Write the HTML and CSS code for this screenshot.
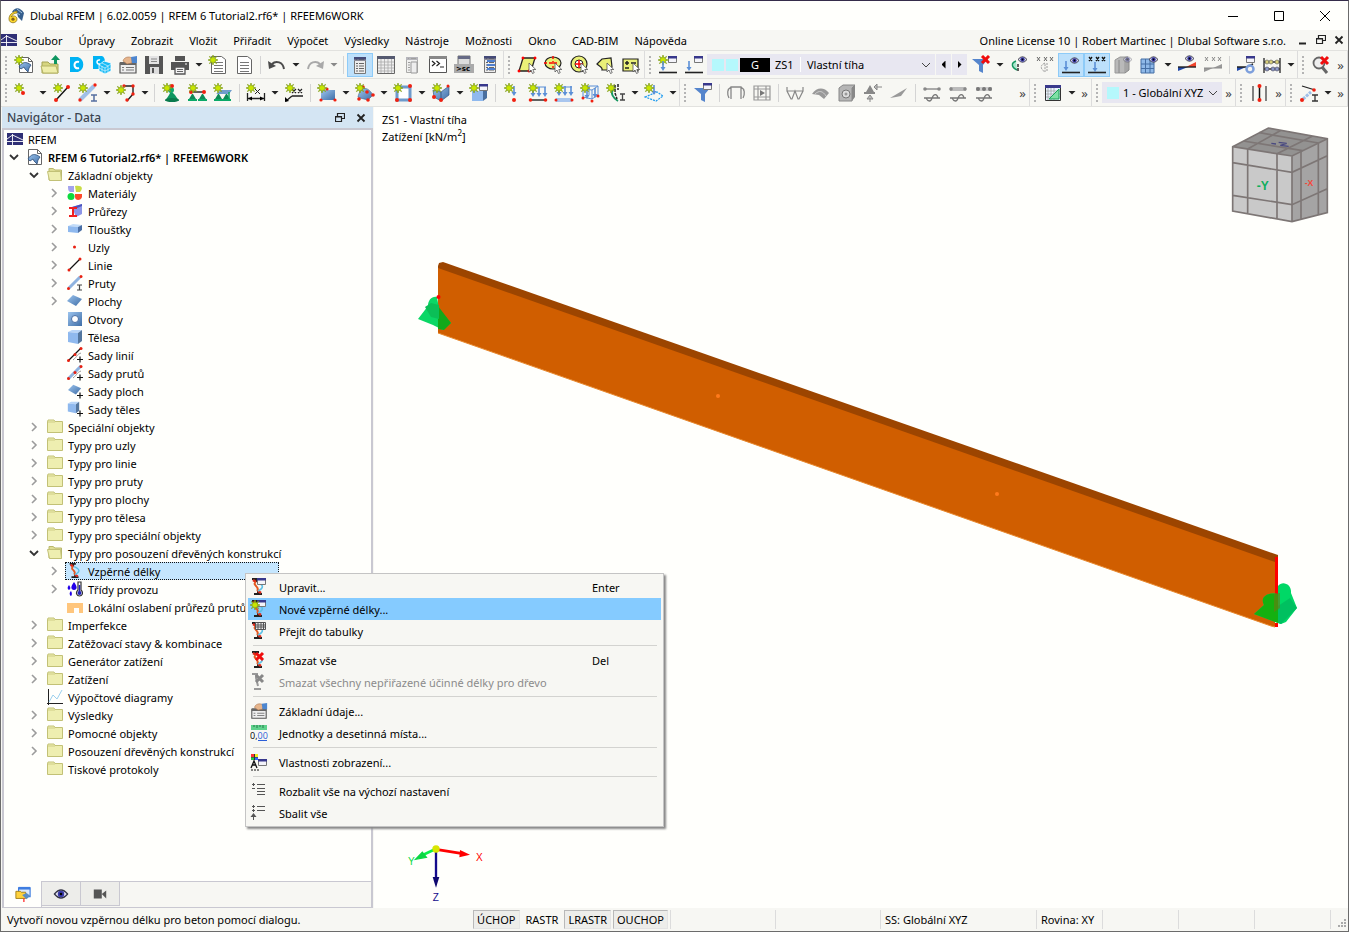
FILE: index.html
```html
<!DOCTYPE html>
<html lang="cs">
<head>
    <meta charset="utf-8">
    <meta name="viewport" content="width=device-width, initial-scale=1.0">
    <title>Dlubal RFEM</title>
    <link rel="stylesheet" href="styles.css">
</head>
<body>
<!-- icon sprite -->
<svg class="sprite" aria-hidden="true">
    <defs>
        <linearGradient id="blue" x1="0" y1="0" x2="1" y2="1"><stop offset="0" stop-color="#9cc4ee"/><stop offset="1" stop-color="#3f6ea6"/></linearGradient>
        <g id="star"><path d="M5 0l.9 3L8.6 1.4 7 4l3 1-3 1 1.6 2.6L5.9 7 5 10l-.9-3-2.7 1.6L3 6 0 5l3-1-1.6-2.6L4.1 3z" fill="#c8e600" stroke="#7d9a1a" stroke-width=".7"/></g>
        <g id="win"><path d="M.5.5h8v6h-8z" fill="#f4f4fa" stroke="#777"/><path d="M0 0h9v2.500H0z" fill="#38388c"/></g>
        <g id="eye"><path d="M0 3.500Q4.500-2 9 3.500 4.500 9 0 3.500z" fill="#dde" stroke="#334" stroke-width=".9"/><circle cx="4.500" cy="3.500" r="2.200" fill="#3a3aa8"/><circle cx="4.500" cy="3.500" r=".9" fill="#000"/></g>
        <g id="cross"><path d="M1 1l7 7M8 1L1 8" stroke="#f00d0d" stroke-width="3"/></g>
        <g id="down"><path d="M2 0v7" stroke="#5b8fd6" stroke-width="1.600"/><path d="M-.5 6h5L2 10z" fill="#5b8fd6"/></g>
        <g id="cursor"><path d="M0 0v9l2-2 1.500 3.500 1.700-.8L3.800 6.500h3z" fill="#fff" stroke="#555" stroke-width=".8"/></g>
        <g id="list"><path d="M.5.5h11v15h-11z" fill="#ededed" stroke="#777"/><path d="M0 0h12v3H0z" fill="#8a8a96"/><path d="M2 1.500h1M5 1.500h5M2 5.500h2M5 5.500h5M2 8h2M5 8h5M2 10.500h2M5 10.500h5M2 13h2M5 13h5" stroke="#666"/></g>
        <g id="page"><path d="M.5.500h9l4 4v11H.5z" fill="#fff" stroke="#666"/><path d="M9.500.5v4h4" fill="none" stroke="#666"/></g>
        <g id="swoosh"><path d="M0 6C3 1 7 0 12 4l-2 3-1 4-3-3-1-2-3 2z" fill="url(#blue)" stroke="#2c4d77" stroke-width=".8"/></g>
        <g id="sup"><path d="M4 0h1l3 5H1z" fill="#0d8a57"/><path d="M0 5h9v2H0z" fill="#0aa867"/></g>
        <g id="strut"><path d="M2 1h7M6 1v3M4 16h8M8 16v-3" stroke="#222" stroke-width="2"/><path d="M3 2l3 2M11 15l-3-2" stroke="#e02a1a" stroke-width="2.500"/><path d="M6 4C1 7 11 9 7 13" fill="none" stroke="#e4571f" stroke-width="2"/><path d="M7 4c7 3 7 6 1 9" fill="none" stroke="#5cc0e6" stroke-width="1.600"/></g>
    </defs>
    <symbol id="bridge" viewBox="0 0 16 12"><path d="M0 0h16v12H0z" fill="#2f2f75"/><path d="M0 8.500h16M5.500 1v11M5.500 2L0 6M5.500 2L16 7" stroke="#fff" stroke-width=".9"/></symbol>
    <symbol id="app" viewBox="0 0 16 16"><path d="M4 4C7-1 12-1 16 5l-2 8-4-4-1-4z" fill="#365f8d"/><path d="M6 3l6 4M9 1l5 4" stroke="#a5c3dd"/><path d="M9 3C4 4 1 7 1 11c0 5 8 5 8 0 0-3-4-4-6-2 1-2 3-4 6-4z" fill="#ffd92e" stroke="#8b731c" stroke-width=".8"/><circle cx="5" cy="11.200" r="1.600" fill="#83631c"/></symbol>
    <symbol id="model" viewBox="0 0 16 16"><use href="#page" x="1"/><use href="#swoosh" x="1" y="4"/></symbol>
    <symbol id="fold" viewBox="0 0 16 16"><path d="M.5 3V13.500h15V2.500H8l-1-1.500H1z" fill="#eeeeb0" stroke="#c2c176"/><path d="M1 3h7" stroke="#cfce86"/></symbol>
    <symbol id="foldopen" viewBox="0 0 16 16"><path d="M2 5V1.500h4L8 3h6.500v10H2z" fill="#dedd94" stroke="#b9b86d"/><path d="M.5 4.500h13l1 9h-12z" fill="#eeeeb0" stroke="#c2c176"/></symbol>
    <symbol id="right" viewBox="0 0 10 10"><path d="M3 1l4 4-4 4" fill="none" stroke="#9c9c9c" stroke-width="1.600"/></symbol>
    <symbol id="open" viewBox="0 0 10 10"><path d="M1 3l4 4 4-4" fill="none" stroke="#333" stroke-width="1.800"/></symbol>
    <symbol id="restore" viewBox="0 0 10 10"><path d="M2.500 3V.5h7v5H7M.5 3.500h6v5h-6zM.5 4h6" fill="none" stroke="#222" stroke-width="1.200"/></symbol>
    <symbol id="close" viewBox="0 0 10 10"><path d="M1.500 1.500l7 7M8.500 1.500l-7 7" stroke="#222" stroke-width="1.800"/></symbol>

    <!-- tree -->
    <symbol id="mat" viewBox="0 0 16 16"><path d="M1 1h6v6H3C1 6 1 4 1 1z" fill="#a3a3ec"/><path d="M8 1c8-1 8 3 5 6H9z" fill="#c9dc45"/><circle cx="4" cy="11.500" r="3.500" fill="#0ddb3e"/><path d="M8 9h7v3c-1 4-7 4-7 0z" fill="#ff4a2a"/></symbol>
    <symbol id="sect" viewBox="0 0 16 16"><path d="M5 4l10-3v10l-6 3z" fill="#8c95e6"/><path d="M5 4l10-3v2L8 6z" fill="#4c55bd"/><path d="M2 5h8M2 13h8M6 5v8" stroke="#f02020" stroke-width="2"/></symbol>
    <symbol id="thick" viewBox="0 0 16 16"><path d="M1 5l5-2 9 1-4 2z" fill="#c2dcf8"/><path d="M1 5l10 1v6L1 11z" fill="#8fb9ee"/><path d="M11 6l4-2v5l-4 3z" fill="#4a6fa5"/></symbol>
    <symbol id="node" viewBox="0 0 16 16"><circle cx="7.500" cy="8" r="1.500" fill="#e82010"/></symbol>
    <symbol id="line" viewBox="0 0 16 16"><path d="M2 13L13 2" stroke="#111" stroke-width="1.200"/><circle cx="2" cy="13" r="1.500" fill="#e82010"/><circle cx="13" cy="2" r="1.500" fill="#e82010"/></symbol>
    <symbol id="memb" viewBox="0 0 16 16"><path d="M2 13L13 2" stroke="#8fb3e0" stroke-width="3"/><circle cx="1.500" cy="13.500" r="1.500" fill="#e82010"/><circle cx="14" cy="1.500" r="1.500" fill="#e82010"/><path d="M10 10h5M10 15h5M12.500 10v5" stroke="#444" stroke-width="1.200"/></symbol>
    <symbol id="surf" viewBox="0 0 16 16"><path d="M0 8l6-6 9 4-6 7z" fill="url(#blue)"/></symbol>
    <symbol id="hole" viewBox="0 0 16 16"><path d="M1 1h14v14H1z" fill="url(#blue)"/><circle cx="8" cy="8" r="3.500" fill="#fff" stroke="#4a6fa5"/></symbol>
    <symbol id="solid" viewBox="0 0 16 16"><path d="M1 3l4-2h10l-4 3z" fill="#b8d5f8"/><path d="M1 3l10 1v11L1 13z" fill="#8fb9ee"/><path d="M11 4l4-3v11l-4 3z" fill="#54779f"/></symbol>
    <symbol id="plus" viewBox="0 0 16 16"><path d="M10 12.500h6M13 9.500v6" stroke="#111" stroke-width="1.200"/></symbol>
    <symbol id="slin" viewBox="0 0 16 16"><path d="M6 13c5-4 3-5 8-7" fill="none" stroke="#999"/><path d="M1 14L14 1" stroke="#111" stroke-width="1.200"/><circle cx="1.500" cy="13.500" r="1.500" fill="#e82010"/><circle cx="8" cy="7.500" r="1.500" fill="#e82010"/><circle cx="14" cy="1.500" r="1.500" fill="#e82010"/><use href="#plus" width="16" height="16"/></symbol>
    <symbol id="smem" viewBox="0 0 16 16"><path d="M6 13c5-4 3-5 8-7" fill="none" stroke="#999"/><path d="M1 14L14 1" stroke="#8fb3e0" stroke-width="3"/><circle cx="1.500" cy="13.500" r="1.500" fill="#e82010"/><circle cx="8" cy="7.500" r="1.500" fill="#e82010"/><circle cx="14" cy="1.500" r="1.500" fill="#e82010"/><use href="#plus" width="16" height="16"/></symbol>
    <symbol id="ssur" viewBox="0 0 16 16"><use href="#surf" width="16" height="14"/><use href="#plus" width="16" height="16"/></symbol>
    <symbol id="ssol" viewBox="0 0 16 16"><use href="#solid" width="13" height="13"/><use href="#plus" width="16" height="16"/></symbol>
    <symbol id="buck" viewBox="0 0 18 18"><use href="#strut" x="1"/></symbol>
    <symbol id="drops" viewBox="0 0 16 16"><path d="M7 1c4 5 3 8 0 8S3 6 7 1zM2 4c3 4 0 5 0 5S-1 8 2 4zM4 10c2 3 0 5 0 5s-3-2 0-5z" fill="#2200e8"/><path d="M11 1h3v8c3 3 1 6-1.500 6S8 12 11 9z" fill="#fff" stroke="#333" stroke-width="1.200"/><circle cx="12.500" cy="12" r="2" fill="#2222b8"/><path d="M12.500 4v7" stroke="#2222b8" stroke-width="1.500"/></symbol>
    <symbol id="notch" viewBox="0 0 16 16"><path d="M0 4h16v10h-4V9H7v5H0z" fill="#ffc67c"/></symbol>
    <symbol id="graph" viewBox="0 0 16 16"><path d="M1.500 0v14.500H16M0 14.500h3M1.500 16v-2" fill="none" stroke="#222"/><path d="M2 13l4-7 4 4 5-9" fill="none" stroke="#9bd0ee"/></symbol>

    <!-- main toolbar -->
    <symbol id="new" viewBox="0 0 20 20"><use href="#page" x="5" y="2"/><use href="#swoosh" x="5" y="6"/><use href="#star"/></symbol>
    <symbol id="openf" viewBox="0 0 20 20"><path d="M2 18V7h6l2 2h8v9z" fill="#d6d580" stroke="#a5a455"/><path d="M1 11h15l2 7H3z" fill="#eeedaa" stroke="#b5b465"/><path d="M14 9V5h-3l4.500-5L20 5h-3v4z" fill="#0e9660"/></symbol>
    <symbol id="cloud" viewBox="0 0 20 20"><path d="M4 2h8c7 2 7 13 0 15H4z" fill="#00b3f4"/><path d="M13 7c-6-2-6 8 0 6" fill="none" stroke="#fff" stroke-width="2"/></symbol>
    <symbol id="cloud2" viewBox="0 0 20 20"><path d="M1 1h9c4 1 4 11 0 13H1z" fill="#00b3f4"/><path d="M7 10l5-4 7 2v8l-6 3-6-3z" fill="#18bbf5" stroke="#fff" stroke-width=".8"/><path d="M7 10l6 3 6-4M13 13v6M10 8l6 3M10 17v-6M7 13l6 3 6-3M16 11v6" stroke="#d5f4ff" stroke-width=".7" fill="none"/><path d="M8 5c-4-1-4 5 0 4" fill="none" stroke="#fff" stroke-width="1.500"/></symbol>
    <symbol id="base" viewBox="0 0 20 20"><path d="M2 8h16v10H2z" fill="#eee" stroke="#555" stroke-width="1.200"/><path d="M2 7h16v3H2z" fill="#666"/><path d="M4 12.500h2M8 12.500h8M4 15h2M8 15h8" stroke="#777"/><path d="M5 6c1-4 6-5 9-3v5L9 9z" fill="#e6b58c" stroke="#a8714c" stroke-width=".6"/><path d="M13 2l6-1v7h-5z" fill="#4d86cf"/></symbol>
    <symbol id="save" viewBox="0 0 20 20"><path d="M1 1h18v18H1z" fill="#555"/><path d="M5 1h10v8H5z" fill="#e4e4e4"/><path d="M7 4h6M7 6.500h6" stroke="#888"/><path d="M6 12h9v7H6z" fill="#ddd"/><path d="M8 13h2v5H8z" fill="#555"/></symbol>
    <symbol id="print" viewBox="0 0 20 20"><path d="M5 1h10v5H5zM1 7h18v8H1z" fill="#555"/><path d="M5 12h10v7H5z" fill="#f4f4f4" stroke="#555" stroke-width="1.300"/><path d="M7 14.500h6M7 16.500h6" stroke="#666"/><path d="M15 9h2" stroke="#fff"/></symbol>
    <symbol id="rep" viewBox="0 0 20 20"><path d="M3.500 1.500h10l4 3v14h-14z" fill="#fff" stroke="#666"/><path d="M6 7.500h9M6 10.500h9M6 13.500h9M6 16.500h9" stroke="#777"/></symbol>
    <symbol id="repn" viewBox="0 0 20 20"><use href="#rep" width="20" height="20"/><use href="#star"/></symbol>
    <symbol id="undo" viewBox="0 0 20 20"><path d="M5 9c4-4 11-2 12 5" fill="none" stroke="#4b4b4b" stroke-width="2"/><path d="M1 6l1 8 7-3z" fill="#4b4b4b"/></symbol>
    <symbol id="redo" viewBox="0 0 20 20"><path d="M15 9C11 5 4 7 3 14" fill="none" stroke="#a9a9a9" stroke-width="2"/><path d="M19 6l-1 8-7-3z" fill="#a9a9a9"/></symbol>
    <symbol id="navi" viewBox="0 0 20 20"><use href="#list" x="4" y="3"/><path d="M4 2h12v2.500H4z" fill="#444a78"/></symbol>
    <symbol id="tabl" viewBox="0 0 20 20"><path d="M1.500 1.500h17v17h-17z" fill="#eee" stroke="#666"/><path d="M1 1h18v3H1z" fill="#555a70"/><path d="M5 4v14M8.500 4v14M12 4v14M15.500 4v14M2 7h16M2 10h16M2 13h16M2 16h16" stroke="#aaa" stroke-width=".8"/></symbol>
    <symbol id="pan" viewBox="0 0 20 20"><g opacity=".6"><use href="#list" x="4" y="2"/></g><path d="M9 7h6v11H9z" fill="#eee" stroke="#999"/></symbol>
    <symbol id="cons" viewBox="0 0 20 20"><path d="M1.500 1.500h17v16h-17z" fill="#fff" stroke="#555"/><path d="M1 1h18v3H1z" fill="#888"/><path d="M4 6l3 2.500L4 11M8.500 6l3 2.500-3 2.500M12 12h4" fill="none" stroke="#222" stroke-width="1.200"/></symbol>
    <symbol id="resn" viewBox="0 0 20 20"><use href="#list" x="4" y="2"/><path d="M4 1h12v2.500H4z" fill="#444a78"/><path d="M7 6h8M7 10h8M7 14h8" stroke="#4d7fd0" stroke-width="2"/></symbol>
    <symbol id="spoly" viewBox="0 0 20 20"><path d="M6 3h12l-4 13H2z" fill="#eaf078" stroke="#222" stroke-width="1.300"/><path d="M5 2h2v2H5zM17 2h2v2h-2zM1 15h2v2H1zM11 15h2v2h-2z" stroke="#f00" fill="#f00" stroke-width=".6"/><use href="#cursor" x="12" y="8"/></symbol>
    <symbol id="sell" viewBox="0 0 20 20"><ellipse cx="10" cy="8" rx="8" ry="6" fill="#eaf078" stroke="#222" stroke-width="1.200"/><path d="M10 1v12M1 8h6M6 8h8" stroke="#f00" stroke-width="1.400" stroke-dasharray="3 2"/><use href="#cursor" x="12" y="8"/></symbol>
    <symbol id="scir" viewBox="0 0 20 20"><circle cx="10" cy="9" r="8" fill="#eaf078" stroke="#222" stroke-width="1.200"/><circle cx="10" cy="9" r="4" fill="#fff" stroke="#222"/><path d="M10 5v8M6 9h8" stroke="#f00" stroke-width="1.500"/><use href="#cursor" x="12" y="8"/></symbol>
    <symbol id="slas" viewBox="0 0 20 20"><path d="M2 9L7 4l9-1 1 9-3 3H7c1-3-3-4-5-6z" fill="#eaf078" stroke="#222" stroke-width="1.200"/><use href="#cursor" x="12" y="8"/></symbol>
    <symbol id="snum" viewBox="0 0 20 20"><path d="M2 4h15v12H2z" fill="#eaf078" stroke="#222" stroke-width="1.200"/><path d="M4 8h4M6 6v4M10 8h5M4 13h4" stroke="#222" stroke-width="1.500"/><use href="#cursor" x="12" y="8"/></symbol>
    <symbol id="lcn" viewBox="0 0 20 20"><use href="#star"/><use href="#down" x="3" y="6"/><use href="#win" x="10" y="1"/><path d="M1 17.500h18" stroke="#222" stroke-width="1.600"/></symbol>
    <symbol id="lc" viewBox="0 0 20 20"><use href="#down" x="3" y="6"/><use href="#win" x="10" y="1"/><path d="M1 17.500h18" stroke="#222" stroke-width="1.600"/></symbol>
    <symbol id="filx" viewBox="0 0 20 20"><path d="M1 4h16l-5 6v8l-4-2v-6z" fill="#5585cc"/><use href="#cross" x="10" y="0"/></symbol>
    <symbol id="filw" viewBox="0 0 20 20"><path d="M1 5h16l-5 6v8l-4-2v-6z" fill="#5585cc"/><use href="#win" x="10" y="0"/></symbol>
    <symbol id="supe" viewBox="0 0 20 20"><path d="M7 6c-5 2-5 6 1 9" fill="#a9e6cc" stroke="#14965f" stroke-width="1.400"/><path d="M9 9v8" stroke="#222" stroke-width="1.400" stroke-dasharray="3 1"/><use href="#eye" x="9" y="1"/></symbol>
    <symbol id="xsup" viewBox="0 0 20 20"><path d="M2 2l3 4M5 2L2 6M9 2l3 4M12 2L9 6M15 2l3 4M18 2l-3 4" stroke="#666"/><path d="M10 8c-5 2-5 6 0 9V8M12 8v9" fill="none" stroke="#999" stroke-dasharray="2 1"/></symbol>
    <symbol id="ldse" viewBox="0 0 20 20"><use href="#down" x="3" y="6"/><use href="#eye" x="9" y="2"/><path d="M1 17.500h18" stroke="#222" stroke-width="1.600"/></symbol>
    <symbol id="xld" viewBox="0 0 20 20"><path d="M2 2l3 4M5 2L2 6M9 2l3 4M12 2L9 6M15 2l3 4M18 2l-3 4" stroke="#111" stroke-width="1.300"/><use href="#down" x="6" y="7"/><path d="M1 17.500h18" stroke="#222" stroke-width="1.600"/></symbol>
    <symbol id="cubg" viewBox="0 0 20 20"><path d="M2 5l5-3h8l-3 3v13H2z" fill="#b9b9b9" stroke="#999"/><path d="M6 5v13M12 5l4-2v12l-4 3" stroke="#888" fill="#a5a5a5"/><g opacity=".4"><use href="#eye" x="10" y="1"/></g></symbol>
    <symbol id="gride" viewBox="0 0 20 20"><path d="M2 4h13v14H2z" fill="#8fb9e8" stroke="#456fa5"/><path d="M6.500 4v14M11 4v14M2 9h13M2 13.500h13" stroke="#456fa5"/><use href="#eye" x="10" y="1"/></symbol>
    <symbol id="rese" viewBox="0 0 20 20"><path d="M1 12h10l-10 4z" fill="#2148a8"/><path d="M19 12H9l10-5z" fill="#f0442b"/><path d="M1 12h18" stroke="#222" stroke-width="1.400"/><use href="#eye" x="8" y="0"/></symbol>
    <symbol id="xres" viewBox="0 0 20 20"><path d="M2 2l3 4M5 2L2 6M9 2l3 4M12 2L9 6M15 2l3 4M18 2l-3 4" stroke="#888"/><path d="M1 13h9l-9 4zM19 13h-9l9-4z" fill="#999"/><path d="M1 13h18" stroke="#888"/></symbol>
    <symbol id="calc" viewBox="0 0 20 20"><path d="M1 12h9l-9 4z" fill="#2148a8"/><path d="M1 12h10l6-3" stroke="#222" stroke-width="1.400" fill="none"/><use href="#win" x="10" y="1"/><circle cx="14" cy="14" r="3.500" fill="none" stroke="#7d9fdc" stroke-width="2.500"/></symbol>
    <symbol id="abac" viewBox="0 0 20 20"><path d="M2 3v15M18 3v15M2 7h16M2 14h16" stroke="#333" stroke-width="1.400"/><g fill="#d8cf7a" stroke="#555" stroke-width=".6"><circle cx="5" cy="7" r="2"/><circle cx="9" cy="7" r="2"/><circle cx="15" cy="7" r="2"/></g><g fill="#8b97c9" stroke="#445" stroke-width=".6"><circle cx="5" cy="14" r="2"/><circle cx="11" cy="14" r="2"/><circle cx="15" cy="14" r="2"/></g></symbol>
    <symbol id="zoomx" viewBox="0 0 20 20"><circle cx="8" cy="8" r="5.500" fill="#eee" stroke="#666" stroke-width="1.800"/><path d="M11 12l5 6" stroke="#666" stroke-width="3"/><use href="#cross" x="9" y="1"/></symbol>

    <!-- insert toolbar -->
    <symbol id="inod" viewBox="0 0 20 20"><use href="#star"/><circle cx="9" cy="10" r="2" fill="#f02010"/></symbol>
    <symbol id="ilin" viewBox="0 0 20 20"><path d="M4 17L16 4" stroke="#111" stroke-width="1.400"/><circle cx="4" cy="17" r="2" fill="#f02010"/><circle cx="16" cy="4" r="2" fill="#f02010"/><use href="#star" x="1"/></symbol>
    <symbol id="imem" viewBox="0 0 20 20"><path d="M2 17L16 3" stroke="#9fbfe8" stroke-width="4"/><circle cx="2" cy="17" r="1.700" fill="#f02010"/><circle cx="17" cy="2" r="1.700" fill="#f02010"/><path d="M13 12h6M13 18h6M16 12v6" stroke="#556fa0" stroke-width="1.500"/><use href="#star"/></symbol>
    <symbol id="ipol" viewBox="0 0 20 20"><path d="M8 3h9v8l-6 7" fill="none" stroke="#222" stroke-width="1.400"/><g fill="#f02010"><circle cx="8" cy="3" r="1.700"/><circle cx="17" cy="3" r="1.700"/><circle cx="17" cy="11" r="1.700"/><circle cx="11" cy="17" r="1.700"/></g><use href="#star" y="2"/></symbol>
    <symbol id="isup" viewBox="0 0 20 20"><path d="M10 8l4 4 4 6H4l4-6z" fill="#0d9660"/><ellipse cx="11" cy="17" rx="7" ry="2" fill="#0a7a4d"/><circle cx="10" cy="7" r="3" fill="#13a86c"/><circle cx="11" cy="3" r="2" fill="#f02010"/><use href="#star" x="1"/></symbol>
    <symbol id="isul" viewBox="0 0 20 20"><use href="#sup" x="1" y="11"/><use href="#sup" x="11" y="11"/><path d="M4 9h13" stroke="#222" stroke-width="1.400"/><circle cx="4" cy="9" r="2" fill="#f02010"/><circle cx="17" cy="9" r="2" fill="#f02010"/><use href="#star" x="1"/></symbol>
    <symbol id="isus" viewBox="0 0 20 20"><path d="M3 11l5-4h11l-3 4z" fill="#6f9ccc"/><use href="#sup" x="1" y="11"/><use href="#sup" x="9" y="11"/><path d="M16 9v8" stroke="#0aa867" stroke-width="1.500"/><use href="#star"/></symbol>
    <symbol id="idim" viewBox="0 0 20 20"><path d="M1.500 10v8M18.500 10v8M1 15.500h18" stroke="#222" stroke-width="1.300"/><path d="M2 15.500l4-2v4zM18 15.500l-4-2v4z"/><path d="M9 6l5 5M14 6l-5 5" stroke="#222"/><use href="#star"/></symbol>
    <symbol id="ixx" viewBox="0 0 20 20"><path d="M8 13h11M8 13l-6 5" stroke="#222" stroke-width="1.400"/><path d="M1 19v-5l4 4z"/><path d="M8 6l4 4M12 6l-4 4M14 6l4 4M18 6l-4 4" stroke="#222" stroke-width="1.200"/><use href="#star" x="1"/></symbol>
    <symbol id="isur" viewBox="0 0 20 20"><path d="M4 7h14v10H4z" fill="url(#blue)"/><circle cx="4" cy="17" r="1.600" fill="#f02010"/><circle cx="18" cy="17" r="1.600" fill="#f02010"/><circle cx="10" cy="6" r="1.600" fill="#f02010"/><use href="#star"/></symbol>
    <symbol id="ibow" viewBox="0 0 20 20"><path d="M3 14c2-10 9-12 15-2l-5 5-8-2z" fill="url(#blue)" stroke="#3a5f8c" stroke-width=".6"/><g fill="#f02010"><circle cx="8" cy="4" r="1.800"/><circle cx="12" cy="9" r="1.800"/><circle cx="18" cy="12" r="1.800"/><circle cx="4" cy="16" r="1.800"/><circle cx="13" cy="17" r="1.800"/></g><use href="#star"/></symbol>
    <symbol id="ihol" viewBox="0 0 20 20"><path d="M4 4h13v13H4z" fill="#fff" stroke="#6e9acb" stroke-width="3"/><g fill="#f02010"><circle cx="17" cy="3" r="2"/><circle cx="4" cy="17" r="2"/><circle cx="17" cy="17" r="2"/></g><use href="#star"/></symbol>
    <symbol id="isol" viewBox="0 0 20 20"><path d="M2 7l8 2 8-6v9l-8 6-7-4z" fill="url(#blue)" stroke="#385a85" stroke-width=".7"/><path d="M10 9v9" stroke="#385a85"/><g fill="#f02010"><circle cx="3" cy="14" r="2"/><circle cx="10" cy="17" r="2"/><circle cx="17" cy="3" r="1.500"/></g><use href="#star" x="1"/></symbol>
    <symbol id="ibox" viewBox="0 0 20 20"><path d="M3 8h11v10H3z" fill="#8fb9ee"/><path d="M14 8l4-3v10l-4 3z" fill="#4a6f9f"/><use href="#star"/><use href="#win" x="10" y="1"/></symbol>
    <symbol id="ln" viewBox="0 0 20 20"><use href="#down" x="10" y="3"/><circle cx="12" cy="17" r="2" fill="#f02010"/><use href="#star" x="2"/></symbol>
    <symbol id="ll" viewBox="0 0 20 20"><path d="M4 4h14" stroke="#5b8fd6"/><use href="#down" x="3" y="4"/><use href="#down" x="9" y="4"/><use href="#down" x="15" y="4"/><path d="M2 17h16" stroke="#222" stroke-width="1.400"/><circle cx="2.500" cy="17" r="1.800" fill="#f02010"/><circle cx="17.500" cy="17" r="1.800" fill="#f02010"/><use href="#star"/></symbol>
    <symbol id="lm" viewBox="0 0 20 20"><path d="M4 4h14" stroke="#5b8fd6"/><use href="#down" x="3" y="3"/><use href="#down" x="9" y="3"/><use href="#down" x="15" y="3"/><path d="M2 17h16" stroke="#a9c6ee" stroke-width="4"/><circle cx="2" cy="17" r="1.500" fill="#f02010"/><circle cx="18" cy="17" r="1.500" fill="#f02010"/><use href="#star"/></symbol>
    <symbol id="lsu" viewBox="0 0 20 20"><path d="M3 6l6-3h9v9l-6 4-9-2zM9 3v9M12 7v9M3 6l9 1 6-4" fill="none" stroke="#5b8fd6"/><use href="#down" x="5" y="6"/><use href="#down" x="13" y="5"/><g fill="#f02010"><circle cx="3" cy="15" r="1.500"/><circle cx="12" cy="18" r="1.500"/><circle cx="18" cy="13" r="1.500"/></g><use href="#star"/></symbol>
    <symbol id="lfr" viewBox="0 0 20 20"><path d="M7 6c-3 4 0 9 5 12" fill="none" stroke="#14965f" stroke-width="1.800"/><path d="M9 2v8l2 6M12 1v6" stroke="#222" stroke-width="1.500" fill="none" stroke-dasharray="3 1"/><path d="M14 11h5M14 17h5M16.500 11v6" stroke="#444" stroke-width="1.300"/><use href="#star"/></symbol>
    <symbol id="lfree" viewBox="0 0 20 20"><path d="M1 14l12-5 6 4-7 5z" fill="none" stroke="#1d9bf0" stroke-width="1.200" stroke-dasharray="2 1"/><use href="#down" x="8" y="2"/><use href="#star"/></symbol>
    <symbol id="gfra" viewBox="0 0 20 20"><path d="M5 16V4h10v12M5 4C1 6 1 11 3 15M15 4c4 2 4 7 2 11" fill="none" stroke="#888" stroke-width="1.300"/></symbol>
    <symbol id="gfil" viewBox="0 0 20 20"><path d="M2 3h16v14H2zM2 6h16M2 14h16M6 3v14M14 3v14" fill="none" stroke="#999" stroke-width="1.200"/><path d="M8 7l5 3-5 3z" fill="#777"/></symbol>
    <symbol id="gcur" viewBox="0 0 20 20"><path d="M2 4v4l4 8h1l3-8 3 8h1l4-8V4M2 8h16" fill="none" stroke="#888" stroke-width="1.200"/></symbol>
    <symbol id="gsur" viewBox="0 0 20 20"><path d="M1 11c5-7 12-7 17-1l-5 6-5-4z" fill="#999"/><path d="M4 11c4-4 8-3 11 2" stroke="#ccc" fill="none"/></symbol>
    <symbol id="gsol" viewBox="0 0 20 20"><path d="M2 5l4-3h12l-3 3v13H2z" fill="#b5b5b5" stroke="#888"/><path d="M15 5l3-3v12l-3 4z" fill="#888"/><circle cx="9" cy="11" r="4" fill="#ddd" stroke="#777"/><circle cx="9" cy="11" r="1.500" fill="#999"/></symbol>
    <symbol id="grea" viewBox="0 0 20 20"><path d="M7 2l4 7H3zM1 9h11v2H1z" fill="#888"/><path d="M19 4h-5M14 1l-3 3 3 3zM7 19v-4M4 16l3-4 3 4z" fill="#bbb" stroke="#888"/></symbol>
    <symbol id="gsec" viewBox="0 0 20 20"><path d="M1 15L18 5l-6 8-5 1z" fill="#999"/></symbol>
    <symbol id="gd1" viewBox="0 0 20 20"><path d="M2 6h16" stroke="#888" stroke-width="1.400"/><circle cx="3" cy="6" r="1.800" fill="#888"/><circle cx="17" cy="6" r="1.800" fill="#888"/><path d="M2 15h16M4 15c2 4 5 4 6 0 2-5 5-4 6 0" fill="none" stroke="#777" stroke-width="1.300"/></symbol>
    <symbol id="gd2" viewBox="0 0 20 20"><path d="M2 6h16" stroke="#bbb" stroke-width="4"/><circle cx="3" cy="6" r="1.800" fill="#888"/><circle cx="17" cy="6" r="1.800" fill="#888"/><path d="M2 15h16M4 15c2 4 5 4 6 0 2-5 5-4 6 0" fill="none" stroke="#777" stroke-width="1.300"/></symbol>
    <symbol id="gd3" viewBox="0 0 20 20"><path d="M2 6h16" stroke="#ccc" stroke-width="4"/><circle cx="4" cy="6" r="2" fill="#777"/><circle cx="10" cy="6" r="2" fill="#777"/><circle cx="16" cy="6" r="2" fill="#777"/><path d="M2 15h16M4 15c2 4 5 4 6 0 2-5 5-4 6 0" fill="none" stroke="#777" stroke-width="1.300"/></symbol>
    <symbol id="work" viewBox="0 0 20 20"><path d="M2.500 2.500h15v15h-15z" fill="#e8f4ff" stroke="#333"/><path d="M2 2h16v3H2z" fill="#3a3a8c"/><path d="M5 5v12M8 5v12M11 5v12M3 8h14M3 11h14M3 14h14" stroke="#999" stroke-width=".7"/><path d="M6 16h10V6z" fill="#7fe0a4" stroke="#18a058"/></symbol>
    <symbol id="axis" viewBox="0 0 20 20"><path d="M4 3v15M17 3v15" stroke="#444" stroke-width="1.300"/><path d="M10.500 3v14" stroke="#111" stroke-width="1.500"/><circle cx="10.500" cy="3" r="2" fill="#f02010"/><circle cx="10.500" cy="17" r="2" fill="#f02010"/></symbol>
    <symbol id="ecc" viewBox="0 0 20 20"><path d="M3 3l13 4" stroke="#222" stroke-width="1.300"/><circle cx="15" cy="7" r="1.800" fill="#f02010"/><path d="M4 16l8-7" stroke="#9fbfe8" stroke-width="3" stroke-dasharray="3 1"/><circle cx="3" cy="17" r="2" fill="#f02010"/><path d="M13 12h6M13 18h6M16 12v6" stroke="#333" stroke-width="1.300"/></symbol>

    <!-- context menu -->
    <symbol id="medit" viewBox="0 0 18 18"><use href="#strut"/><use href="#win" x="7" y="0"/></symbol>
    <symbol id="mnew" viewBox="0 0 18 18"><use href="#strut"/><use href="#win" x="7" y="0"/><use href="#star"/></symbol>
    <symbol id="mtab" viewBox="0 0 18 18"><use href="#strut"/><path d="M5.500.5h10v7h-10zM5 3h10M5 5h10M8 0v8M11 0v8M13.500 0v8" fill="#eee" stroke="#555"/></symbol>
    <symbol id="mdel" viewBox="0 0 18 18"><use href="#strut"/><use href="#cross" x="5" y="1"/></symbol>
    <symbol id="mdelg" viewBox="0 0 18 18"><path d="M2 1h6M6 1v4l2 8M4 16h7" stroke="#999" stroke-width="2" fill="none"/><path d="M6 2l7 7M13 2L6 9" stroke="#888" stroke-width="3"/></symbol>
    <symbol id="mexp" viewBox="0 0 18 18"><path d="M2 2.500h3M3.500 1v3M2 6.500h3M7 2.500h8M7 6.500h8M7 9.500h8M7 12.500h8" stroke="#555"/></symbol>
    <symbol id="mcol" viewBox="0 0 18 18"><path d="M2 2.500h3M3.500 1v3M2 6.500h3M3.500 5v3M7 2.500h8M7 6.500h8M3.500 16v-5" stroke="#555"/><path d="M.5 13l3-4 3 4z" fill="#555"/></symbol>
    <symbol id="mdis" viewBox="0 0 18 18"><path d="M1 1h7v6H1z" fill="#333"/><path d="M1 1h3v3H1z" fill="#f33"/><path d="M5 1h3v3H5z" fill="#ee2"/><path d="M1 4.500h3v2.500H1z" fill="#2c4"/><path d="M5 4.500h3v2.500H5z" fill="#36f"/><path d="M1 15l3-7 3 7M2 12h4" fill="none" stroke="#111" stroke-width="1.300"/><path d="M1 17h8" stroke="#111" stroke-dasharray="2 1"/><use href="#win" x="8" y="6"/></symbol>
    <symbol id="tdata" viewBox="0 0 18 18"><path d="M4 2h13v10H4z" fill="#dce9fb" stroke="#3f7de0" stroke-width="1.300"/><path d="M4 1h13v3H4z" fill="#3f7de0"/><path d="M1 6h5l1 1h5v7H1z" fill="#ffd23c" stroke="#a07b12"/><path d="M8 10l5-2 4 3-4 4z" fill="#5b8fc4"/><path d="M10 14v4" stroke="#f33" stroke-width="1.500"/></symbol>
    <symbol id="tcam" viewBox="0 0 18 18"><path d="M2 4h9v10H2zM11 9l5-4v9z" fill="#555"/></symbol>
</svg>

<div class="window">
    <header class="titlebar">
        <svg class="i16"><use href="#app"/></svg>
        <span class="title">Dlubal RFEM | 6.02.0059 | RFEM 6 Tutorial2.rf6* | RFEEM6WORK</span>
        <div class="winbtns">
            <button aria-label="Minimalizovat"><svg viewBox="0 0 10 10"><path d="M0 5.500h10" stroke="#000"/></svg></button>
            <button aria-label="Maximalizovat"><svg viewBox="0 0 10 10"><path d="M.5.5h9v9h-9z" fill="none" stroke="#000"/></svg></button>
            <button aria-label="Zavřít"><svg viewBox="0 0 10 10"><path d="M0 0l10 10M10 0L0 10" stroke="#000"/></svg></button>
        </div>
    </header>

    <nav class="menubar">
        <svg class="logo"><use href="#bridge"/></svg>
        <button>Soubor</button>
        <button>Úpravy</button>
        <button>Zobrazit</button>
        <button>Vložit</button>
        <button>Přiřadit</button>
        <button>Výpočet</button>
        <button>Výsledky</button>
        <button>Nástroje</button>
        <button>Možnosti</button>
        <button>Okno</button>
        <button>CAD-BIM</button>
        <button>Nápověda</button>
        <span class="license">Online License 10 | Robert Martinec | Dlubal Software s.r.o.</span>
        <div class="docbtns">
            <button aria-label="Minimalizovat okno"><svg viewBox="0 0 10 10"><path d="M1 8.500h7" stroke="#222" stroke-width="2"/></svg></button>
            <button aria-label="Obnovit okno"><svg><use href="#restore"/></svg></button>
            <button aria-label="Zavřít okno"><svg><use href="#close"/></svg></button>
        </div>
    </nav>

    <div class="toolrow">
        <div class="toolbar">
            <button class="tool" aria-label="Nový"><svg><use href="#new"/></svg></button>
            <button class="tool" aria-label="Otevřít"><svg><use href="#openf"/></svg></button>
            <button class="tool" aria-label="Dlubal Center"><svg><use href="#cloud"/></svg></button>
            <button class="tool" aria-label="Bloky"><svg><use href="#cloud2"/></svg></button>
            <button class="tool" aria-label="Základní údaje"><svg><use href="#base"/></svg></button>
            <button class="tool" aria-label="Uložit"><svg><use href="#save"/></svg></button>
            <button class="tool" aria-label="Tisk"><svg><use href="#print"/></svg></button>
            <button class="caret" aria-label="Možnosti tisku"></button>
            <button class="tool" aria-label="Nový protokol"><svg><use href="#repn"/></svg></button>
            <button class="tool" aria-label="Protokol"><svg><use href="#rep"/></svg></button>
            <i class="sep"></i>
            <button class="tool" aria-label="Zpět"><svg><use href="#undo"/></svg></button>
            <button class="caret" aria-label="Historie zpět"></button>
            <button class="tool" aria-label="Znovu"><svg><use href="#redo"/></svg></button>
            <button class="caret off" aria-label="Historie znovu"></button>
            <i class="sep"></i>
            <button class="tool on" aria-label="Navigátor"><svg><use href="#navi"/></svg></button>
            <button class="tool" aria-label="Tabulky"><svg><use href="#tabl"/></svg></button>
            <button class="tool" aria-label="Panel"><svg><use href="#pan"/></svg></button>
            <button class="tool" aria-label="Konzole"><svg><use href="#cons"/></svg></button>
            <button class="tool" aria-label="Skripty"><svg viewBox="0 0 20 20"><path d="M4 1h12v9H4z" fill="#ddd" stroke="#777"/><path d="M4 1h12v3H4z" fill="#666a85"/><path d="M0 9h20v9H0z" fill="#aaa"/><text x="2" y="16" class="sc">&gt;sc</text></svg></button>
            <button class="tool" aria-label="Přehled"><svg><use href="#resn"/></svg></button>
        </div>
        <div class="toolbar">
            <button class="tool" aria-label="Výběr rovnoběžníkem"><svg><use href="#spoly"/></svg></button>
            <button class="tool" aria-label="Výběr elipsou"><svg><use href="#sell"/></svg></button>
            <button class="tool" aria-label="Výběr mezikružím"><svg><use href="#scir"/></svg></button>
            <button class="tool" aria-label="Výběr lasem"><svg><use href="#slas"/></svg></button>
            <button class="tool" aria-label="Výběr čísly"><svg><use href="#snum"/></svg></button>
        </div>
        <div class="toolbar grow">
            <button class="tool" aria-label="Nový zatěžovací stav"><svg><use href="#lcn"/></svg></button>
            <button class="tool" aria-label="Zatěžovací stavy"><svg><use href="#lc"/></svg></button>
            <div class="loadcase">
                <i class="swatch"></i><i class="swatch"></i><b class="cat">G</b>
                <label for="lcase">ZS1</label>
                <select id="lcase"><option>Vlastní tíha</option></select>
            </div>
            <button class="step prev" aria-label="Předchozí"></button>
            <button class="step next" aria-label="Další"></button>
            <button class="tool" aria-label="Zrušit filtr"><svg><use href="#filx"/></svg></button>
            <button class="caret" aria-label="Filtry"></button>
            <button class="tool" aria-label="Zobrazit podpory"><svg><use href="#supe"/></svg></button>
            <button class="tool" aria-label="Hodnoty podpor"><svg><use href="#xsup"/></svg></button>
            <button class="tool on" aria-label="Zobrazit zatížení"><svg><use href="#ldse"/></svg></button>
            <button class="tool on" aria-label="Hodnoty zatížení"><svg><use href="#xld"/></svg></button>
            <button class="tool" aria-label="Zobrazit tělesa"><svg><use href="#cubg"/></svg></button>
            <button class="tool" aria-label="Zobrazit síť"><svg><use href="#gride"/></svg></button>
            <button class="caret" aria-label="Možnosti sítě"></button>
            <button class="tool" aria-label="Zobrazit výsledky"><svg><use href="#rese"/></svg></button>
            <button class="tool" aria-label="Hodnoty výsledků"><svg><use href="#xres"/></svg></button>
            <i class="sep"></i>
            <button class="tool" aria-label="Výpočet"><svg><use href="#calc"/></svg></button>
            <button class="tool" aria-label="Spočítat"><svg><use href="#abac"/></svg></button>
            <button class="caret" aria-label="Možnosti výpočtu"></button>
        </div>
        <div class="toolbar">
            <button class="tool" aria-label="Zrušit zoom"><svg><use href="#zoomx"/></svg></button>
            <button class="more">»</button>
        </div>
    </div>

    <div class="toolrow">
        <div class="toolbar grow">
            <button class="tool" aria-label="Nový uzel"><svg><use href="#inod"/></svg></button>
            <button class="caret" aria-label="Uzly"></button>
            <button class="tool" aria-label="Nová linie"><svg><use href="#ilin"/></svg></button>
            <button class="tool" aria-label="Nový prut"><svg><use href="#imem"/></svg></button>
            <button class="caret" aria-label="Pruty"></button>
            <button class="tool" aria-label="Polylinie"><svg><use href="#ipol"/></svg></button>
            <button class="caret" aria-label="Linie"></button>
            <i class="sep"></i>
            <button class="tool" aria-label="Uzlová podpora"><svg><use href="#isup"/></svg></button>
            <button class="tool" aria-label="Liniová podpora"><svg><use href="#isul"/></svg></button>
            <button class="tool" aria-label="Plošná podpora"><svg><use href="#isus"/></svg></button>
            <i class="sep"></i>
            <button class="tool" aria-label="Kóta"><svg><use href="#idim"/></svg></button>
            <button class="caret" aria-label="Kóty"></button>
            <button class="tool" aria-label="Poznámka"><svg><use href="#ixx"/></svg></button>
            <i class="sep"></i>
            <button class="tool" aria-label="Nová plocha"><svg><use href="#isur"/></svg></button>
            <button class="caret" aria-label="Plochy"></button>
            <button class="tool" aria-label="Zakřivená plocha"><svg><use href="#ibow"/></svg></button>
            <button class="caret" aria-label="Zakřivené plochy"></button>
            <button class="tool" aria-label="Nový otvor"><svg><use href="#ihol"/></svg></button>
            <button class="caret" aria-label="Otvory"></button>
            <button class="tool" aria-label="Nové těleso"><svg><use href="#isol"/></svg></button>
            <button class="caret" aria-label="Tělesa"></button>
            <button class="tool" aria-label="Nový objekt"><svg><use href="#ibox"/></svg></button>
            <i class="sep"></i>
            <button class="tool" aria-label="Zatížení na uzel"><svg><use href="#ln"/></svg></button>
            <button class="tool" aria-label="Zatížení na linii"><svg><use href="#ll"/></svg></button>
            <button class="tool" aria-label="Zatížení na prut"><svg><use href="#lm"/></svg></button>
            <button class="tool" aria-label="Zatížení na plochu"><svg><use href="#lsu"/></svg></button>
            <button class="tool" aria-label="Imperfekce"><svg><use href="#lfr"/></svg></button>
            <button class="caret" aria-label="Typy imperfekcí"></button>
            <button class="tool" aria-label="Volné zatížení"><svg><use href="#lfree"/></svg></button>
            <button class="caret" aria-label="Volná zatížení"></button>
        </div>
        <div class="toolbar results">
            <button class="tool" aria-label="Filtr výsledků"><svg><use href="#filw"/></svg></button>
            <i class="sep"></i>
            <button class="tool" aria-label="Deformace"><svg><use href="#gfra"/></svg></button>
            <button class="tool" aria-label="Animace"><svg><use href="#gfil"/></svg></button>
            <i class="sep"></i>
            <button class="tool" aria-label="Výsledky na prutech"><svg><use href="#gcur"/></svg></button>
            <button class="tool" aria-label="Výsledky na plochách"><svg><use href="#gsur"/></svg></button>
            <button class="tool" aria-label="Výsledky na tělesech"><svg><use href="#gsol"/></svg></button>
            <button class="tool" aria-label="Reakce"><svg><use href="#grea"/></svg></button>
            <button class="tool" aria-label="Řez"><svg><use href="#gsec"/></svg></button>
            <i class="sep"></i>
            <button class="tool" aria-label="Průběh na linii"><svg><use href="#gd1"/></svg></button>
            <button class="tool" aria-label="Průběh na prutu"><svg><use href="#gd2"/></svg></button>
            <button class="tool" aria-label="Průběh na sadě"><svg><use href="#gd3"/></svg></button>
            <button class="more push">»</button>
        </div>
        <div class="toolbar">
            <button class="tool" aria-label="Pracovní rovina"><svg><use href="#work"/></svg></button>
            <button class="caret" aria-label="Roviny"></button>
            <button class="more">»</button>
        </div>
        <div class="toolbar">
            <div class="coords">
                <i class="swatch"></i>
                <select aria-label="Souřadný systém"><option>1 - Globální XYZ</option></select>
            </div>
            <button class="more">»</button>
        </div>
        <div class="toolbar">
            <button class="tool" aria-label="Osy"><svg><use href="#axis"/></svg></button>
            <button class="more">»</button>
        </div>
        <div class="toolbar">
            <button class="tool" aria-label="Excentricita"><svg><use href="#ecc"/></svg></button>
            <button class="caret" aria-label="Úpravy prutů"></button>
            <button class="more">»</button>
        </div>
    </div>

    <main class="work">
        <aside class="dock">
            <div class="dockhead">
                <h2>Navigátor - Data</h2>
                <button aria-label="Uvolnit panel"><svg><use href="#restore"/></svg></button>
                <button aria-label="Zavřít panel"><svg><use href="#close"/></svg></button>
            </div>
            <div class="treebox">
                <ul class="tree">
                    <li><div class="row root"><svg class="i16"><use href="#bridge"/></svg>RFEM</div></li>
                    <li><div class="row bold"><button class="exp" aria-label="Sbalit"><svg><use href="#open"/></svg></button><svg class="i16"><use href="#model"/></svg>RFEM 6 Tutorial2.rf6* | RFEEM6WORK</div>
                    <ul>
                        <li><div class="row"><button class="exp" aria-label="Sbalit"><svg><use href="#open"/></svg></button><svg class="i16"><use href="#foldopen"/></svg>Základní objekty</div>
                        <ul>
                            <li><div class="row"><button class="exp" aria-label="Rozbalit"><svg><use href="#right"/></svg></button><svg class="i16"><use href="#mat"/></svg>Materiály</div></li>
                            <li><div class="row"><button class="exp" aria-label="Rozbalit"><svg><use href="#right"/></svg></button><svg class="i16"><use href="#sect"/></svg>Průřezy</div></li>
                            <li><div class="row"><button class="exp" aria-label="Rozbalit"><svg><use href="#right"/></svg></button><svg class="i16"><use href="#thick"/></svg>Tloušťky</div></li>
                            <li><div class="row"><button class="exp" aria-label="Rozbalit"><svg><use href="#right"/></svg></button><svg class="i16"><use href="#node"/></svg>Uzly</div></li>
                            <li><div class="row"><button class="exp" aria-label="Rozbalit"><svg><use href="#right"/></svg></button><svg class="i16"><use href="#line"/></svg>Linie</div></li>
                            <li><div class="row"><button class="exp" aria-label="Rozbalit"><svg><use href="#right"/></svg></button><svg class="i16"><use href="#memb"/></svg>Pruty</div></li>
                            <li><div class="row"><button class="exp" aria-label="Rozbalit"><svg><use href="#right"/></svg></button><svg class="i16"><use href="#surf"/></svg>Plochy</div></li>
                            <li><div class="row"><span class="exp"></span><svg class="i16"><use href="#hole"/></svg>Otvory</div></li>
                            <li><div class="row"><span class="exp"></span><svg class="i16"><use href="#solid"/></svg>Tělesa</div></li>
                            <li><div class="row"><span class="exp"></span><svg class="i16"><use href="#slin"/></svg>Sady linií</div></li>
                            <li><div class="row"><span class="exp"></span><svg class="i16"><use href="#smem"/></svg>Sady prutů</div></li>
                            <li><div class="row"><span class="exp"></span><svg class="i16"><use href="#ssur"/></svg>Sady ploch</div></li>
                            <li><div class="row"><span class="exp"></span><svg class="i16"><use href="#ssol"/></svg>Sady těles</div></li>
                        </ul></li>
                        <li><div class="row"><button class="exp" aria-label="Rozbalit"><svg><use href="#right"/></svg></button><svg class="i16"><use href="#fold"/></svg>Speciální objekty</div></li>
                        <li><div class="row"><button class="exp" aria-label="Rozbalit"><svg><use href="#right"/></svg></button><svg class="i16"><use href="#fold"/></svg>Typy pro uzly</div></li>
                        <li><div class="row"><button class="exp" aria-label="Rozbalit"><svg><use href="#right"/></svg></button><svg class="i16"><use href="#fold"/></svg>Typy pro linie</div></li>
                        <li><div class="row"><button class="exp" aria-label="Rozbalit"><svg><use href="#right"/></svg></button><svg class="i16"><use href="#fold"/></svg>Typy pro pruty</div></li>
                        <li><div class="row"><button class="exp" aria-label="Rozbalit"><svg><use href="#right"/></svg></button><svg class="i16"><use href="#fold"/></svg>Typy pro plochy</div></li>
                        <li><div class="row"><button class="exp" aria-label="Rozbalit"><svg><use href="#right"/></svg></button><svg class="i16"><use href="#fold"/></svg>Typy pro tělesa</div></li>
                        <li><div class="row"><button class="exp" aria-label="Rozbalit"><svg><use href="#right"/></svg></button><svg class="i16"><use href="#fold"/></svg>Typy pro speciální objekty</div></li>
                        <li><div class="row"><button class="exp" aria-label="Sbalit"><svg><use href="#open"/></svg></button><svg class="i16"><use href="#foldopen"/></svg>Typy pro posouzení dřevěných konstrukcí</div>
                        <ul>
                            <li><div class="row selected"><button class="exp" aria-label="Rozbalit"><svg><use href="#right"/></svg></button><svg class="i16"><use href="#buck"/></svg>Vzpěrné délky</div></li>
                            <li><div class="row"><button class="exp" aria-label="Rozbalit"><svg><use href="#right"/></svg></button><svg class="i16"><use href="#drops"/></svg>Třídy provozu</div></li>
                            <li><div class="row"><span class="exp"></span><svg class="i16"><use href="#notch"/></svg>Lokální oslabení průřezů prutů</div></li>
                        </ul></li>
                        <li><div class="row"><button class="exp" aria-label="Rozbalit"><svg><use href="#right"/></svg></button><svg class="i16"><use href="#fold"/></svg>Imperfekce</div></li>
                        <li><div class="row"><button class="exp" aria-label="Rozbalit"><svg><use href="#right"/></svg></button><svg class="i16"><use href="#fold"/></svg>Zatěžovací stavy &amp; kombinace</div></li>
                        <li><div class="row"><button class="exp" aria-label="Rozbalit"><svg><use href="#right"/></svg></button><svg class="i16"><use href="#fold"/></svg>Generátor zatížení</div></li>
                        <li><div class="row"><button class="exp" aria-label="Rozbalit"><svg><use href="#right"/></svg></button><svg class="i16"><use href="#fold"/></svg>Zatížení</div></li>
                        <li><div class="row"><span class="exp"></span><svg class="i16"><use href="#graph"/></svg>Výpočtové diagramy</div></li>
                        <li><div class="row"><button class="exp" aria-label="Rozbalit"><svg><use href="#right"/></svg></button><svg class="i16"><use href="#fold"/></svg>Výsledky</div></li>
                        <li><div class="row"><button class="exp" aria-label="Rozbalit"><svg><use href="#right"/></svg></button><svg class="i16"><use href="#fold"/></svg>Pomocné objekty</div></li>
                        <li><div class="row"><button class="exp" aria-label="Rozbalit"><svg><use href="#right"/></svg></button><svg class="i16"><use href="#fold"/></svg>Posouzení dřevěných konstrukcí</div></li>
                        <li><div class="row"><span class="exp"></span><svg class="i16"><use href="#fold"/></svg>Tiskové protokoly</div></li>
                    </ul></li>
                </ul>
                <div class="tabs">
                    <button class="active" aria-label="Data"><svg><use href="#tdata"/></svg></button>
                    <button aria-label="Zobrazit"><svg viewBox="-1 -2 11 11"><use href="#eye"/></svg></button>
                    <button aria-label="Pohledy"><svg><use href="#tcam"/></svg></button>
                </div>
            </div>
        </aside>

        <section class="view">
            <p class="caption">ZS1 - Vlastní tíha<br>Zatížení [kN/m<sup>2</sup>]</p>
            <svg class="scene" viewBox="374 107 974 801">
                <path d="M438 272v-6l1-3 4-1 835 293v6l-3 6z" fill="#9c4500"/>
                <path d="M438 268l837 294v65l-4-1L438 333z" fill="#d05e00"/>
                <path d="M438 333l833 293 4 1" fill="none" stroke="#e8892e"/>
                <path d="M1276.500 557v38M1276.500 623v4" stroke="#f00" stroke-width="3"/>
                <circle cx="718" cy="396" r="2" fill="#ff7a1c"/><circle cx="997" cy="494" r="2" fill="#ff7a1c"/>
                <path d="M418 319l10-13c0-6 4-10 9-9l2 12 12 14-8 7-10-5z" fill="#0bd765"/>
                <path d="M438 306l13 17-7 7-6-1z" fill="#12a81a"/>
                <path d="M425 307l6-4 8 2v14l-8-2z" fill="#0bbf57"/>
                <circle cx="438.500" cy="297" r="2" fill="#f00"/>
                <path d="M1278 586c5-6 14-1 13 7l6 15-11 14-5 2-27-10 10-9c-5-9 6-13 14-11z" fill="#00d866"/>
                <path d="M1254 614l10-9c-5-9 6-13 14-11v29z" fill="#14b010"/>
                <path d="M1278 606l12-8 7 10-16 16-3-1z" fill="#00c060"/>
                <path d="M1274 594l6-1v15l-6 4z" fill="#6b7a10" opacity=".6"/>
            </svg>
            <svg class="cube" viewBox="0 0 444 390">
                <path d="M98 110L205 54l177 32-106 52z" fill="#939291"/>
                <path d="M98 110l178 28v197L98 303z" fill="#c9c9c9"/>
                <path d="M276 138l106-52v222l-106 27z" fill="#a5a4a4"/>
                <path d="M98 110L205 54l177 32v222l-106 27-178-32zM143 117l100-56M231 131l107-53M130 93l178 29M178 68l177 31M143 117v194M231 131v196M98 158l178 29 106-50M98 256l178 28 106-48M303 125v203M355 99v216" fill="none" stroke="#7d7675" stroke-width="5"/>
                <path d="M98 110l178 28 106-52M276 138v197" fill="none" stroke="#7d7675" stroke-width="5"/>
                <text x="170" y="241" class="cube-y">-Y</text>
                <text x="314" y="228" class="cube-x">-X</text>
                <path d="M214 100l14 2M236 97l24 3-19 6 25 3" fill="none" stroke="#4a4a80" stroke-width="4"/>
            </svg>
            <svg class="triad" viewBox="0 0 450 234">
                <path d="M168 58l75 12" stroke="#f00" stroke-width="8"/><path d="M240 60l30 14-32 8z" fill="#f00"/>
                <path d="M165 58l-35 16" stroke="#0bf04a" stroke-width="8"/><path d="M107 88l20-21 12 15z" fill="#0bd743" stroke="#0bd743" stroke-width="4"/>
                <path d="M168 62v82" stroke="#140a8c" stroke-width="7"/><path d="M158 141h20l-10 32z" fill="#0f0870"/>
                <circle cx="168" cy="57" r="11" fill="#d9e600"/>
                <text x="288" y="92" fill="#f00">X</text><text x="84" y="106" fill="#0bd743">Y</text><text x="158" y="213" fill="#140a8c">Z</text>
            </svg>
        </section>
    </main>

    <footer class="status">
        <span class="hint">Vytvoří novou vzpěrnou délku pro beton pomocí dialogu.</span>
        <div class="toggles">
            <button class="pressed">ÚCHOP</button>
            <button>RASTR</button>
            <button class="pressed">LRASTR</button>
            <button class="pressed">OUCHOP</button>
        </div>
        <span class="cell c1"></span>
        <span class="cell c1"></span>
        <span class="cell c2">SS: Globální XYZ</span>
        <span class="cell c3">Rovina: XY</span>
        <span class="cell c4"></span>
        <span class="cell c4"></span>
        <span class="cell c4"></span>
        <span class="cell c5"><svg class="sizer" viewBox="0 0 12 18"><path d="M10 9v8M7 12v5M4 15v2" stroke="#aaa" stroke-width="2" stroke-dasharray="2 1"/></svg></span>
    </footer>

    <div class="ctx" role="menu">
        <button><svg><use href="#medit"/></svg><span>Upravit...</span><kbd>Enter</kbd></button>
        <button class="hot"><svg><use href="#mnew"/></svg><span>Nové vzpěrné délky...</span></button>
        <button><svg><use href="#mtab"/></svg><span>Přejít do tabulky</span></button>
        <hr>
        <button><svg><use href="#mdel"/></svg><span>Smazat vše</span><kbd>Del</kbd></button>
        <button disabled><svg><use href="#mdelg"/></svg><span>Smazat všechny nepřiřazené účinné délky pro dřevo</span></button>
        <hr>
        <button><svg><use href="#base"/></svg><span>Základní údaje...</span></button>
        <button><svg viewBox="0 0 18 18"><path d="M1 1h16v5H1z" fill="#5fd28c"/><path d="M4 1v2M7 1v3M10 1v2M13 1v3" stroke="#277a48"/><text x="0" y="15" class="dec">0,<tspan fill="#2c5fd8">00</tspan></text><path d="M8 16.500h9" stroke="#2c5fd8"/></svg><span>Jednotky a desetinná místa...</span></button>
        <hr>
        <button><svg><use href="#mdis"/></svg><span>Vlastnosti zobrazení...</span></button>
        <hr>
        <button><svg><use href="#mexp"/></svg><span>Rozbalit vše na výchozí nastavení</span></button>
        <button><svg><use href="#mcol"/></svg><span>Sbalit vše</span></button>
    </div>
</div>
</body>
</html>
```
FILE: styles.css
```css
* {
    box-sizing: border-box;
    margin: 0;
    padding: 0;
}

body {
    font-family: "Noto Sans", "Open Sans", sans-serif;
    font-size: 11px;
    color: #000;
    background: #f7f7f3;
}

button, select {
    font: inherit;
    color: inherit;
    background: none;
    border: none;
}

ul {
    list-style: none;
}

svg {
    display: block;
    flex: none;
}

.sprite {
    position: absolute;
    width: 0;
    height: 0;
}

.i16 {
    width: 16px;
    height: 16px;
}

.window {
    position: relative;
    display: flex;
    flex-direction: column;
    height: 100vh;
    border: 1px solid #6b6b6b;
    border-top-color: #352c4a;
    overflow: hidden;
}

/* title and menu */
.titlebar {
    display: flex;
    align-items: center;
    height: 29px;
    padding-left: 7px;
    background: #fffffc;
}

.title {
    flex: 1;
    margin-left: 6px;
}

.winbtns {
    display: flex;
}

.winbtns button {
    width: 46px;
    height: 29px;
    display: flex;
    align-items: center;
    justify-content: center;
}

.winbtns svg {
    width: 10px;
    height: 10px;
}

.menubar {
    display: flex;
    align-items: center;
    height: 21px;
    border-bottom: 1px solid #e2e2df;
}

.menubar > button {
    padding: 0 8px;
}

.logo {
    width: 16px;
    height: 12px;
}

.license {
    margin-left: auto;
}

.docbtns {
    display: flex;
    gap: 8px;
    padding: 0 4px 0 12px;
}

.docbtns svg, .dockhead svg {
    width: 10px;
    height: 10px;
}

/* toolbars */
.toolrow {
    display: flex;
    height: 28px;
    border-bottom: 1px solid #e2e2df;
}

.toolbar {
    display: flex;
    align-items: center;
    border-right: 1px solid #dcdcdc;
}

.toolbar::before {
    content: "";
    width: 2px;
    height: 18px;
    margin: 0 4px;
    background: repeating-linear-gradient(#b4b4b4 0 2px, transparent 2px 4px);
}

.toolbar.grow {
    flex: 1;
}

.toolbar.results {
    width: 351px;
}

.tool {
    width: 26px;
    height: 24px;
    display: flex;
    align-items: center;
    justify-content: center;
}

.tool svg {
    width: 20px;
    height: 20px;
}

.tool.on {
    background: #bde0fb;
    outline: 1px solid #8ecbf8;
    outline-offset: -1px;
}

.sc {
    font: bold 7px "DejaVu Sans", sans-serif;
}

.caret {
    width: 12px;
    height: 24px;
}

.caret::after {
    content: "";
    display: block;
    margin: 0 auto;
    width: 8px;
    height: 4px;
    background: #222;
    clip-path: polygon(0 0, 100% 0, 50% 100%);
}

.caret.off::after {
    background: #888;
}

.sep {
    width: 1px;
    height: 18px;
    margin: 0 3px;
    background: #d4d4d4;
}

.more {
    width: 13px;
    font-size: 13px;
    color: #444;
}

.push {
    margin-left: auto;
}

.loadcase {
    display: flex;
    align-items: center;
    flex: 1;
    height: 21px;
    margin-right: 1px;
    padding-left: 5px;
    background: #e8e7f1;
}

.swatch {
    width: 12px;
    height: 12px;
    margin-right: 2px;
    background: #b5f8fc;
}

.cat {
    width: 30px;
    line-height: 14px;
    color: #fff;
    background: #000;
    text-align: center;
    font-weight: normal;
}

.loadcase label {
    width: 31px;
    padding-left: 5px;
    border-right: 1px solid #fff;
}

select {
    flex: 1;
    height: 21px;
    padding: 0 16px 0 6px;
    appearance: none;
    background: url("data:image/svg+xml,%3Csvg xmlns='http://www.w3.org/2000/svg' width='10' height='6'%3E%3Cpath d='M1 1l4 4 4-4' fill='none' stroke='%23444'/%3E%3C/svg%3E") no-repeat right 4px center;
}

.step {
    width: 15px;
    height: 21px;
    margin-right: 1px;
    background: #e8e7f1;
}

.step::after {
    content: "";
    display: block;
    margin: 0 auto;
    width: 4px;
    height: 8px;
    background: #000;
    clip-path: polygon(0 0, 100% 50%, 0 100%);
}

.prev::after {
    clip-path: polygon(100% 0, 0 50%, 100% 100%);
}

.coords {
    display: flex;
    align-items: center;
    width: 120px;
    height: 21px;
    padding-left: 5px;
    background: #e8e7f1;
}

.coords .swatch {
    margin-right: 0;
}

.coords select {
    padding-left: 4px;
}

/* navigator */
.work {
    flex: 1;
    display: flex;
    min-height: 0;
}

.dock {
    display: flex;
    flex-direction: column;
    width: 373px;
    padding: 0 1px;
}

.dockhead {
    display: flex;
    align-items: center;
    gap: 11px;
    height: 21px;
    padding: 0 7px 0 5px;
    background: #d4e5f3;
}

.dockhead h2 {
    flex: 1;
    font-size: 12px;
    font-weight: 500;
    color: #3b4450;
}

.treebox {
    flex: 1;
    display: flex;
    flex-direction: column;
    border: 2px solid #c9c8d1;
    border-bottom-width: 1px;
}

.tree {
    flex: 1;
    padding-left: 2px;
    background: #fffffc;
}

.tree ul {
    padding-left: 20px;
}

.row {
    display: flex;
    align-items: center;
    height: 18px;
    white-space: nowrap;
}

.row .i16 {
    margin: 0 5px 0 5px;
}

.row.root .i16 {
    margin-left: 1px;
}

.row.bold {
    font-weight: 600;
}

.exp {
    width: 16px;
    height: 18px;
    display: flex;
    align-items: center;
    justify-content: center;
    flex: none;
}

.exp svg {
    width: 10px;
    height: 10px;
}

.selected {
    position: relative;
    z-index: 0;
    width: 233px;
}

.selected::before {
    content: "";
    position: absolute;
    z-index: -1;
    inset: 0 0 0 19px;
    background: #c5e6fe;
    border: 1px dotted #111;
}

.tabs {
    display: flex;
    height: 26px;
    background: #f7f7f3;
    border-top: 1px solid #c9c8d1;
}

.tabs button {
    width: 39px;
    height: 24px;
    display: flex;
    align-items: center;
    justify-content: center;
    background: #ededea;
    border: 1px solid #c9c8d1;
    border-top: none;
    border-left: none;
}

.tabs .active {
    width: 38px;
    height: 26px;
    margin-top: -1px;
    background: #fffffc;
    border-bottom: none;
}

.tabs svg {
    width: 16px;
    height: 16px;
}

/* model view */
.view {
    position: relative;
    flex: 1;
    background: #fffffc;
    overflow: hidden;
}

.caption {
    position: absolute;
    left: 8px;
    top: 4px;
    line-height: 17px;
}

.caption sup {
    font-size: 8px;
    line-height: 0;
}

.scene {
    width: 100%;
    height: 100%;
}

.cube {
    position: absolute;
    right: 0;
    top: 3px;
    width: 148px;
    height: 130px;
}

.cube text {
    font-family: "Liberation Sans", sans-serif;
    font-size: 36px;
    font-weight: bold;
}

.cube-y {
    fill: #0fae5d;
}

.cube .cube-x {
    fill: #f4473a;
    font-size: 26px;
}

.triad {
    position: absolute;
    left: 6px;
    bottom: 0;
    width: 150px;
    height: 78px;
}

.triad text {
    font-family: "Liberation Sans", sans-serif;
    font-size: 30px;
}

/* status bar */
.status {
    display: flex;
    align-items: center;
    height: 23px;
    background: #f7f7f3;
}

.hint {
    flex: 1;
    padding-left: 6px;
}

.toggles {
    display: flex;
    gap: 2px;
    padding-right: 2px;
}

.toggles button {
    height: 19px;
    padding: 0 3px;
    border: 1px solid transparent;
}

.toggles .pressed {
    background: #ededea;
    border-color: #b9b9b9 #e4e4e4 #e4e4e4 #b9b9b9;
}

.cell {
    height: 19px;
    padding-left: 4px;
    line-height: 20px;
    border-left: 1px solid #dcdcdc;
}

.c1 {
    width: 105px;
}

.c2 {
    width: 156px;
}

.c3 {
    width: 66px;
}

.c4 {
    width: 76px;
}

.c5 {
    width: 18px;
}

.sizer {
    width: 12px;
    height: 18px;
}

/* context menu */
.ctx {
    position: absolute;
    left: 244px;
    top: 572px;
    width: 419px;
    padding: 2px;
    background: #f7f7f3;
    border: 1px solid #c4c4c4;
    box-shadow: 2px 2px 2px #888;
}

.ctx button {
    display: grid;
    grid-template-columns: 31px 1fr 69px;
    align-items: center;
    width: 100%;
    height: 22px;
    text-align: left;
}

.ctx svg {
    width: 18px;
    height: 18px;
    margin-left: 2px;
}

.ctx .hot {
    background: #85cbff;
}

.ctx button:disabled {
    color: #8b8b8b;
}

.ctx kbd {
    font: inherit;
}

.ctx hr {
    height: 1px;
    margin: 3px 4px 3px 5px;
    border: none;
    background: #d3d3d0;
}

.dec {
    font: 9px "Open Sans", sans-serif;
}
```
